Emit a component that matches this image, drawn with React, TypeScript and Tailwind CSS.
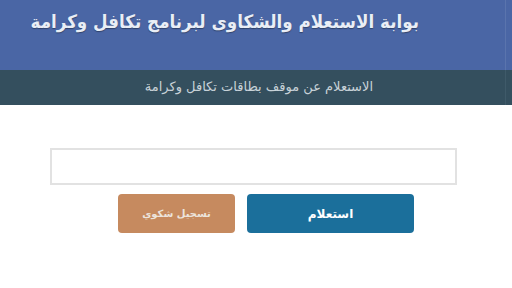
import React from 'react';

const arabic = "font-['DejaVu_Sans',sans-serif]";
const arabicCondensed = "font-['DejaVu_Sans_Condensed','DejaVu_Sans',sans-serif]";

export default function App() {
  return (
    <div dir="rtl" className={`w-[512px] h-[288px] bg-white overflow-hidden ${arabic}`}>
      {/* Header */}
      <div className="flex h-[70px] bg-[#4a66a5]">
        <div className="w-[6px] bg-[#4a66a5]" />
        <div className="w-px bg-[#5a74ad]" />
        <div className="flex-1 pr-[86px] pt-[7px]">
          <h1
            className={`whitespace-nowrap text-[18.6px] font-bold leading-[30px] text-[#e9eef6] [text-shadow:0_1px_1px_rgba(0,0,0,0.35)] ${arabicCondensed}`}
          >
            بوابة الاستعلام والشكاوى لبرنامج تكافل وكرامة
          </h1>
        </div>
      </div>

      {/* Sub header */}
      <div className="flex h-[35px] bg-[#344f5e]">
        <div className="w-[6px] bg-[#344f5e]" />
        <div className="w-px bg-[#3f5a69]" />
        <div className="flex-1 flex items-center pr-[132px] pb-[2px]">
          <p className="whitespace-nowrap text-[13px] text-[#c8d2d8]">
            الاستعلام عن موقف بطاقات تكافل وكرامة
          </p>
        </div>
      </div>

      {/* Form */}
      <div className="mr-[55px] mt-[43px] w-[407px]">
        <input
          type="text"
          className="block w-full h-[37px] border-2 border-[#e2e2e2] bg-white outline-none"
        />
        <div className="flex gap-[12px] pr-[43px] mt-[9px]">
          <button className="w-[167px] h-[39px] rounded-[4px] bg-[#1b6f9b] text-[12px] font-bold text-white">
            استعلام
          </button>
          <button className="w-[117px] h-[39px] rounded-[4px] bg-[#c68a5f] text-[10px] font-bold text-[#ece4dc]">
            تسجيل شكوي
          </button>
        </div>
      </div>
    </div>
  );
}
